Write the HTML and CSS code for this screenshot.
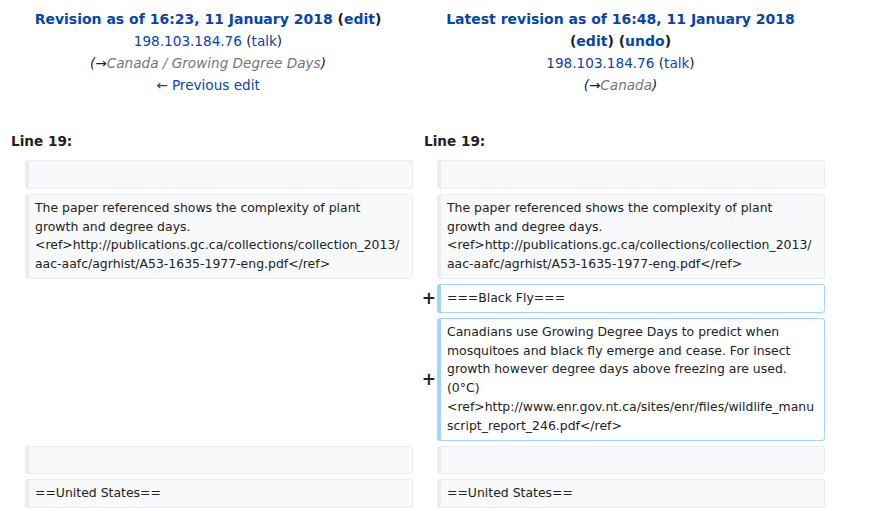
FILE: index.html
```html
<!DOCTYPE html>
<html lang="en">
<head>
<meta charset="utf-8">
<title>Difference between revisions</title>
<link rel="stylesheet" href="styles.css">
</head>
<body>
<div class="diff">
  <div class="head">
    <div class="head-line title"><a href="#">Revision as of 16:23, 11 January 2018</a> <span class="tools">(<a href="#">edit</a>)</span></div>
    <div class="head-line"><a href="#">198.103.184.76</a> (<a href="#">talk</a>)</div>
    <div class="head-line comment">(<a href="#" class="arrow">→</a><span class="auto">Canada / Growing Degree Days</span>)</div>
    <div class="head-line"><a href="#">← Previous edit</a></div>
  </div>
  <div class="head">
    <div class="head-line title"><a href="#">Latest revision as of 16:48, 11 January 2018</a> <span class="tools">(<a href="#">edit</a>) (<a href="#">undo</a>)</span></div>
    <div class="head-line"><a href="#">198.103.184.76</a> (<a href="#">talk</a>)</div>
    <div class="head-line comment">(<a href="#" class="arrow">→</a><span class="auto">Canada</span>)</div>
  </div>

  <div class="lineno">Line 19:</div>
  <div class="lineno">Line 19:</div>

  <div class="marker"></div>
  <div class="box context"><br></div>
  <div class="marker"></div>
  <div class="box context"><br></div>

  <div class="marker"></div>
  <div class="box context">The paper referenced shows the complexity of plant growth and degree days. &lt;ref&gt;http://publications.gc.ca/collections/collection_2013/aac-aafc/agrhist/A53-1635-1977-eng.pdf&lt;/ref&gt;</div>
  <div class="marker"></div>
  <div class="box context">The paper referenced shows the complexity of plant growth and degree days. &lt;ref&gt;http://publications.gc.ca/collections/collection_2013/aac-aafc/agrhist/A53-1635-1977-eng.pdf&lt;/ref&gt;</div>

  <div class="marker"></div>
  <div class="empty"></div>
  <div class="marker">+</div>
  <div class="box added">===Black Fly===</div>

  <div class="marker"></div>
  <div class="empty"></div>
  <div class="marker">+</div>
  <div class="box added">Canadians use Growing Degree Days to predict when mosquitoes and black fly emerge and cease. For insect growth however degree days above freezing are used. (0°C) &lt;ref&gt;http://www.enr.gov.nt.ca/sites/enr/files/wildlife_manuscript_report_246.pdf&lt;/ref&gt;</div>

  <div class="marker"></div>
  <div class="box context"><br></div>
  <div class="marker"></div>
  <div class="box context"><br></div>

  <div class="marker"></div>
  <div class="box context">==United States==</div>
  <div class="marker"></div>
  <div class="box context">==United States==</div>
</div>
</body>
</html>
```

FILE: styles.css
```css
html, body {
  margin: 0;
  padding: 0;
  background: #ffffff;
}

body {
  font-family: "DejaVu Sans", sans-serif;
  color: #222222;
}

a {
  color: #0645ad;
  text-decoration: none;
}

.diff {
  display: grid;
  grid-template-columns: 25px 388px 24px 388px;
  row-gap: 5px;
  align-items: center;
}

.head {
  grid-column: span 2;
  align-self: start;
  text-align: center;
  font-size: 13.6px;
  line-height: 22px;
  padding: 8px 0 0 3px;
  margin-bottom: 29px;
}

.head-line.title {
  font-weight: bold;
  font-size: 14px;
}

.tools {
  white-space: nowrap;
}

.comment {
  font-style: italic;
  color: #222222;
}

.comment .arrow {
  color: #222222;
}

.comment .auto {
  color: #72777d;
}

.lineno {
  grid-column: span 2;
  font-weight: bold;
  font-size: 13.6px;
  line-height: 22px;
  padding-left: 11px;
  margin-bottom: 3px;
}

.marker {
  font-weight: bold;
  font-size: 17px;
  text-align: right;
  padding-right: 1px;
  color: #222222;
}

.box {
  font-size: 12.45px;
  line-height: 18.8px;
  padding: 4px 6px;
  border: 1px solid #eaecf0;
  border-left-width: 4px;
  border-radius: 3px;
  overflow-wrap: break-word;
  word-wrap: break-word;
  align-self: stretch;
}

.context {
  background: #f8f9fa;
}

.added {
  background: #ffffff;
  border-color: #a3d3ff;
}
```
